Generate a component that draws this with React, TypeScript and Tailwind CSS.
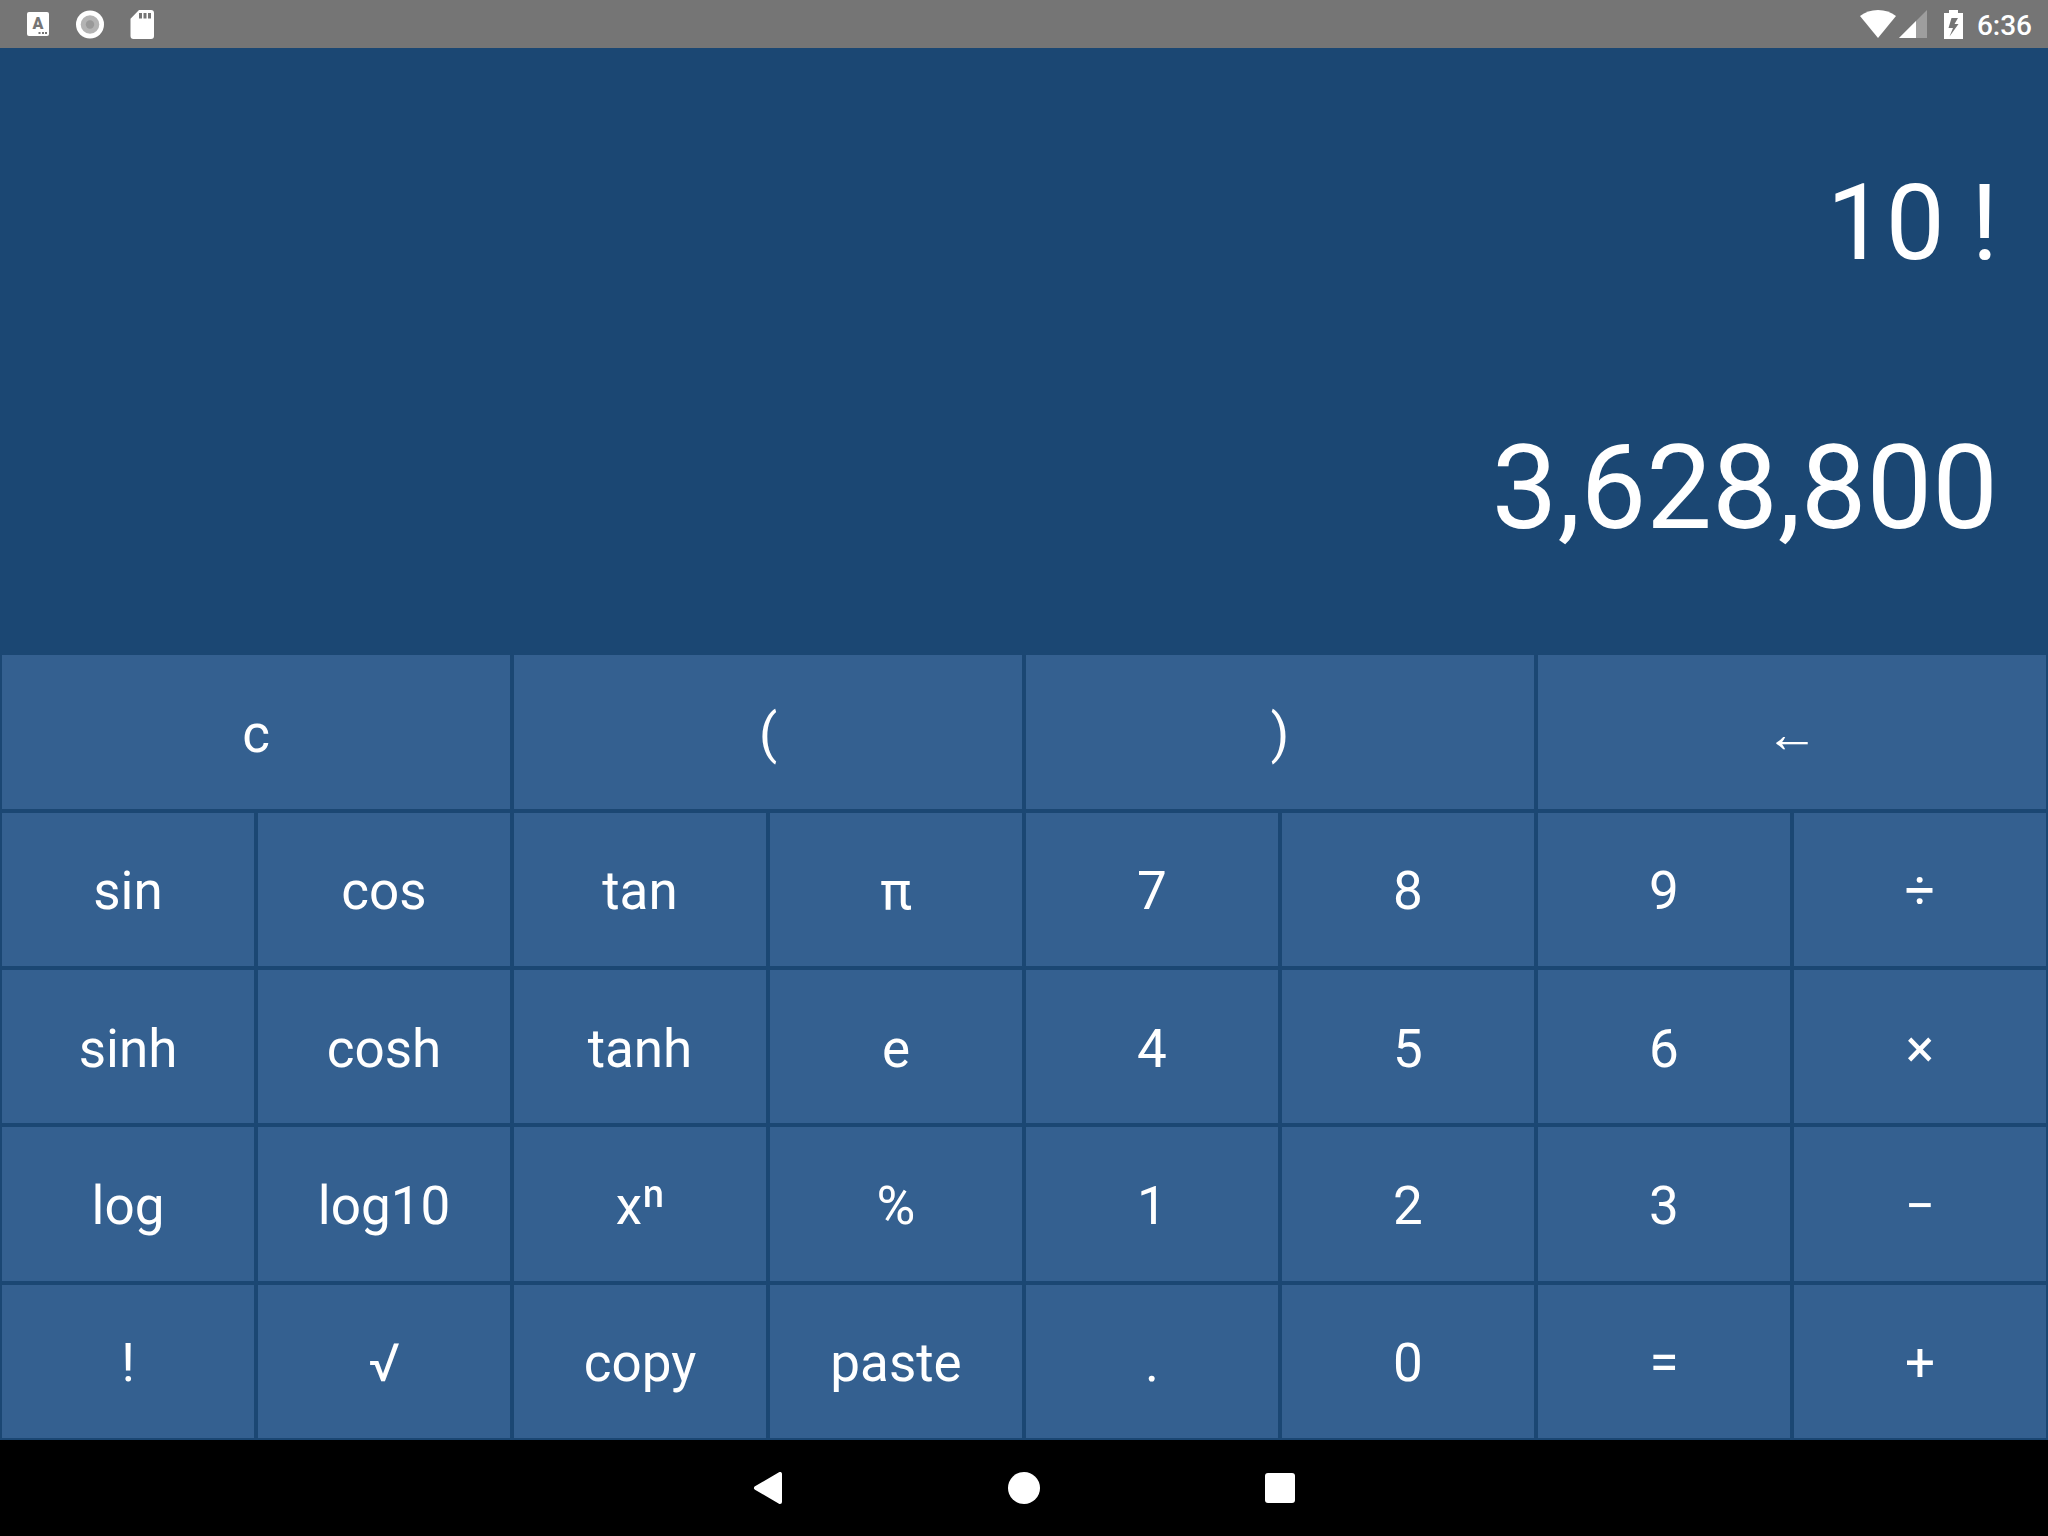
import React from "react";

type Key = { label: string; name?: string; wide?: boolean };

const keys: Key[] = [
  { label: "c", name: "clear", wide: true },
  { label: "(", wide: true },
  { label: ")", wide: true },
  { label: "←", name: "backspace", wide: true },
  { label: "sin" },
  { label: "cos" },
  { label: "tan" },
  { label: "π" },
  { label: "7" },
  { label: "8" },
  { label: "9" },
  { label: "÷" },
  { label: "sinh" },
  { label: "cosh" },
  { label: "tanh" },
  { label: "e" },
  { label: "4" },
  { label: "5" },
  { label: "6" },
  { label: "×" },
  { label: "log" },
  { label: "log10" },
  { label: "xⁿ" },
  { label: "%" },
  { label: "1" },
  { label: "2" },
  { label: "3" },
  { label: "−" },
  { label: "!" },
  { label: "√" },
  { label: "copy" },
  { label: "paste" },
  { label: "." },
  { label: "0" },
  { label: "=" },
  { label: "+" },
];

function StatusBar() {
  return (
    <header className="flex h-12 shrink-0 items-center justify-between bg-[#757575] pr-4 pl-[27px] text-white">
      <div className="flex items-center">
        <svg className="mr-[26px] h-6 w-[22px]" viewBox="0 0 22 24" aria-hidden="true">
          <rect width="22" height="24" rx="2" fill="#fff" />
          <text x="11" y="17" textAnchor="middle" fontFamily="Roboto, sans-serif" fontWeight="900" fontSize="16" fill="#757575">
            A
          </text>
          <path d="M11.5 20h2v2h-2zM15 20h2v2h-2zM18 20h2v2h-2z" fill="#757575" />
        </svg>
        <svg className="mr-[26px] size-[29px]" viewBox="0 0 29 29" aria-hidden="true">
          <circle cx="15" cy="14.5" r="14" fill="#fff" />
          <circle cx="15" cy="14.5" r="9.3" fill="#b3b3b3" />
          <circle cx="15" cy="14.5" r="4.2" fill="#999" />
        </svg>
        <svg className="h-[29px] w-6" viewBox="0 0 24 29" aria-hidden="true">
          <path
            d="M9 0H21a3 3 0 0 1 3 3V26a3 3 0 0 1-3 3H3.500a3 3 0 0 1-3-3V8.700zM9 3v5.500h3V3zM13.500 3v5.500h3V3zM18 3v5.500h3V3z"
            fill="#fff"
            fillRule="evenodd"
          />
        </svg>
      </div>
      <div className="flex items-center">
        <svg className="mr-[3px] h-7 w-9" viewBox="0 0 36 28" aria-hidden="true">
          <path d="M18 28 0 6C5 2 11 0 18 0s13 2 18 6z" fill="#fff" />
        </svg>
        <svg className="mr-[17px] size-7" viewBox="0 0 28 28" aria-hidden="true">
          <path d="M28 0V28H0z" fill="#9e9e9e" />
          <path d="M17 11V28H0z" fill="#fff" />
        </svg>
        <svg className="mr-[14px] h-[29px] w-[19px]" viewBox="0 0 19 29" aria-hidden="true">
          <path d="M5 0h9v3h5v26H0V3h5zM7.500 8 4.500 18h4.500L5.500 26.500 14.500 14H10.500L14 8z" fill="#fff" fillRule="evenodd" />
        </svg>
        <time className="pt-1 text-[28px] leading-8 font-medium">6:36</time>
      </div>
    </header>
  );
}

function Display() {
  return (
    <output className="flex flex-col items-end gap-[133px] pt-[114px] pr-[50px] text-white">
      <span className="text-[105px] leading-[124px]">10 !</span>
      <span className="text-[117px] leading-[138px]">3,628,800</span>
    </output>
  );
}

function Keypad() {
  return (
    <div className="grid auto-rows-fr grid-cols-8">
      {keys.map((key) => (
        <button
          key={key.label}
          type="button"
          aria-label={key.name}
          className={
            "flex items-center justify-center border-2 border-[#1b4773] bg-[#346090] pt-1 text-[53px] leading-[64px] text-white active:bg-[#41709f] " +
            (key.wide ? "col-span-2" : "")
          }
        >
          {key.label}
        </button>
      ))}
    </div>
  );
}

function NavigationBar() {
  return (
    <nav className="flex h-24 shrink-0 justify-center bg-black">
      <button type="button" aria-label="Back" className="flex w-64 items-center justify-center">
        <svg className="size-8" viewBox="0 0 32 32" aria-hidden="true">
          <path d="M4 16 28 2V30z" fill="#fff" stroke="#fff" strokeWidth="4" strokeLinejoin="round" />
        </svg>
      </button>
      <button type="button" aria-label="Home" className="flex w-64 items-center justify-center">
        <span className="size-8 rounded-full bg-white" />
      </button>
      <button type="button" aria-label="Recent apps" className="flex w-64 items-center justify-center">
        <span className="size-[30px] rounded-[3px] bg-white" />
      </button>
    </nav>
  );
}

export default function App() {
  return (
    <div className="flex min-h-screen flex-col bg-[#1b4773] font-[Roboto,'Noto_Sans',sans-serif]">
      <StatusBar />
      <main className="grid grow grid-rows-[10fr_13fr]">
        <Display />
        <Keypad />
      </main>
      <NavigationBar />
    </div>
  );
}
